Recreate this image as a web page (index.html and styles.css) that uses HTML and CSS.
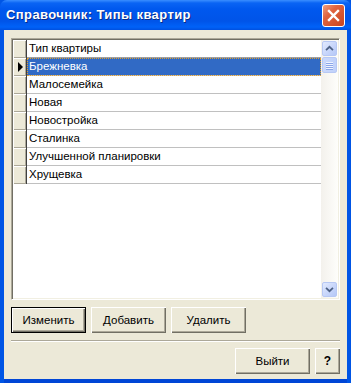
FILE: index.html
```html
<!DOCTYPE html>
<html lang="ru">
<head>
  <meta charset="UTF-8">
  <title>Справочник: Типы квартир</title>
  <link rel="stylesheet" href="styles.css">
</head>
<body>

  <div class="window">
    <div class="titlebar">
      <span class="title">Справочник: Типы квартир</span>
      <div class="close-btn">
        <svg width="21" height="21" viewBox="0 0 21 21">
          <path d="M6 6 L15 15 M15 6 L6 15" stroke="#fff" stroke-width="2.4" stroke-linecap="square"/>
        </svg>
      </div>
    </div>

    <div class="client">
      <div class="grid">
        <div class="grid-body">
          <div class="row header">
            <div class="selector"></div>
            <div class="cell">Тип квартиры</div>
          </div>
          <div class="row">
            <div class="selector"><span class="arrow"></span></div>
            <div class="cell selected">Брежневка</div>
          </div>
          <div class="row">
            <div class="selector"></div>
            <div class="cell">Малосемейка</div>
          </div>
          <div class="row">
            <div class="selector"></div>
            <div class="cell">Новая</div>
          </div>
          <div class="row">
            <div class="selector"></div>
            <div class="cell">Новостройка</div>
          </div>
          <div class="row">
            <div class="selector"></div>
            <div class="cell">Сталинка</div>
          </div>
          <div class="row">
            <div class="selector"></div>
            <div class="cell">Улучшенной планировки</div>
          </div>
          <div class="row">
            <div class="selector"></div>
            <div class="cell">Хрущевка</div>
          </div>
        </div>

        <div class="vscroll">
          <div class="sb-btn">
            <svg width="15" height="15" viewBox="0 0 15 15">
              <path d="M3.5 9.5 L7.5 5.5 L11.5 9.5" fill="none" stroke="#4D6185" stroke-width="2"/>
            </svg>
          </div>
          <div class="sb-thumb">
            <span></span><span></span><span></span><span></span>
          </div>
          <div class="sb-track"></div>
          <div class="sb-btn">
            <svg width="15" height="15" viewBox="0 0 15 15">
              <path d="M3.5 5.5 L7.5 9.5 L11.5 5.5" fill="none" stroke="#4D6185" stroke-width="2"/>
            </svg>
          </div>
        </div>
      </div>

      <div class="actions">
        <button class="btn default">Изменить</button>
        <button class="btn">Добавить</button>
        <button class="btn">Удалить</button>
      </div>

      <div class="separator"></div>

      <div class="footer">
        <button class="btn">Выйти</button>
        <button class="btn help">?</button>
      </div>
    </div>
  </div>

</body>
</html>
```

FILE: styles.css
```css
body {
  margin: 0;
  font-family: "Liberation Sans", Arial, sans-serif;
  font-size: 11.5px;
  background: #fff;
}
.window {
  width: 351px;
  height: 383px;
  display: flex;
  flex-direction: column;
  background: #0055E5;
}
.titlebar {
  height: 30px;
  flex: none;
  display: flex;
  align-items: center;
  justify-content: space-between;
  padding: 0 6px 0 6px;
  box-sizing: border-box;
  border-radius: 7px 7px 0 0;
  background: linear-gradient(to bottom, #3A8EFF 0%, #0A64F4 10%, #0058EE 30%, #0054E8 70%, #0062F8 90%, #0050E0 100%);
}
.title {
  color: #fff;
  font-weight: bold;
  font-size: 13px;
  letter-spacing: 0.4px;
  text-shadow: 1px 1px 0 #0A2C86;
  padding-bottom: 1px;
}
.close-btn {
  width: 21px;
  height: 21px;
  border: 1px solid #fff;
  border-radius: 3px;
  background: linear-gradient(135deg, #F0A080 0%, #E06440 35%, #C9441E 100%);
  display: flex;
}
.client {
  flex: 1;
  display: flex;
  flex-direction: column;
  background: #ECE9D8;
  margin: 0 4px 4px 4px;
  padding: 8px 7px 5px 7px;
  box-shadow: 0 4px 0 #0046D6;
}

/* grid */
.grid {
  height: 262px;
  flex: none;
  display: flex;
  background: #fff;
  border-top: 1px solid #ACA899;
  border-left: 1px solid #ACA899;
  border-right: 1px solid #fff;
  border-bottom: 1px solid #fff;
  box-shadow: inset 1px 1px 0 #716F64, inset -1px -1px 0 #F1EFE2;
  padding: 1px 1px 1px 1px;
  box-sizing: border-box;
}
.grid-body {
  flex: 1;
  display: flex;
  flex-direction: column;
}
.row {
  display: flex;
  height: 18px;
}
.selector {
  width: 13px;
  flex: none;
  background: #ECE9D8;
  border-right: 1px solid #404040;
  box-shadow: inset 1px 1px 0 #fff, inset -1px -1px 0 #ACA899;
  display: flex;
  align-items: center;
  justify-content: center;
}
.arrow {
  width: 0;
  height: 0;
  border-top: 5px solid transparent;
  border-bottom: 5px solid transparent;
  border-left: 5px solid #000;
  margin-left: 1px;
}
.cell {
  flex: 1;
  padding-left: 2px;
  line-height: 17px;
  border-bottom: 1px solid #C0C0C0;
  color: #000;
  white-space: nowrap;
}
.header .cell {
  border-bottom: 1px solid #A0A0A0;
}
.cell.selected {
  background: #316AC5;
  color: #fff;
  outline: 1px dotted #E0A030;
  outline-offset: -1px;
}

/* scrollbar */
.vscroll {
  width: 17px;
  flex: none;
  display: flex;
  flex-direction: column;
  background: linear-gradient(to right, #F3F1EC, #FEFEFB);
}
.sb-btn {
  width: 15px;
  height: 15px;
  margin: 1px;
  border: 1px solid #B7C8F4;
  border-radius: 2px;
  box-sizing: border-box;
  background: linear-gradient(135deg, #E2EAFE 0%, #C5D4FA 60%, #B5C8F7 100%);
  display: flex;
  align-items: center;
  justify-content: center;
  overflow: hidden;
}
.sb-thumb {
  height: 16px;
  margin: 0 1px;
  border: 1px solid #B7C8F4;
  border-radius: 2px;
  box-sizing: border-box;
  background: linear-gradient(to right, #CAD8FB, #C0D1FA);
  display: flex;
  flex-direction: column;
  align-items: center;
  justify-content: center;
  gap: 1px;
}
.sb-thumb span {
  width: 7px;
  height: 1px;
  background: #EEF3FF;
  box-shadow: 0 1px 0 #8CA6E8;
}
.sb-track {
  flex: 1;
}

/* buttons */
.actions {
  display: flex;
  gap: 5px;
  margin-top: 7px;
}
.btn {
  font-family: "Liberation Sans", Arial, sans-serif;
  font-size: 11.5px;
  color: #000;
  width: 75px;
  height: 26px;
  padding: 0;
  background: #ECE9D8;
  border: none;
  box-shadow: inset 1px 1px 0 #fff, inset -1px -1px 0 #716F64, inset -2px -2px 0 #ACA899;
}
.btn.default {
  box-shadow: inset 0 0 0 1px #000, inset 2px 2px 0 #fff, inset -2px -2px 0 #716F64, inset -3px -3px 0 #ACA899;
}
.separator {
  height: 1px;
  margin-top: 7px;
  background: #ACA899;
  border-bottom: 1px solid #fff;
}
.footer {
  display: flex;
  justify-content: flex-end;
  gap: 5px;
  margin-top: 6px;
}
.btn.help {
  width: 25px;
  font-weight: bold;
  font-size: 12px;
}
```
